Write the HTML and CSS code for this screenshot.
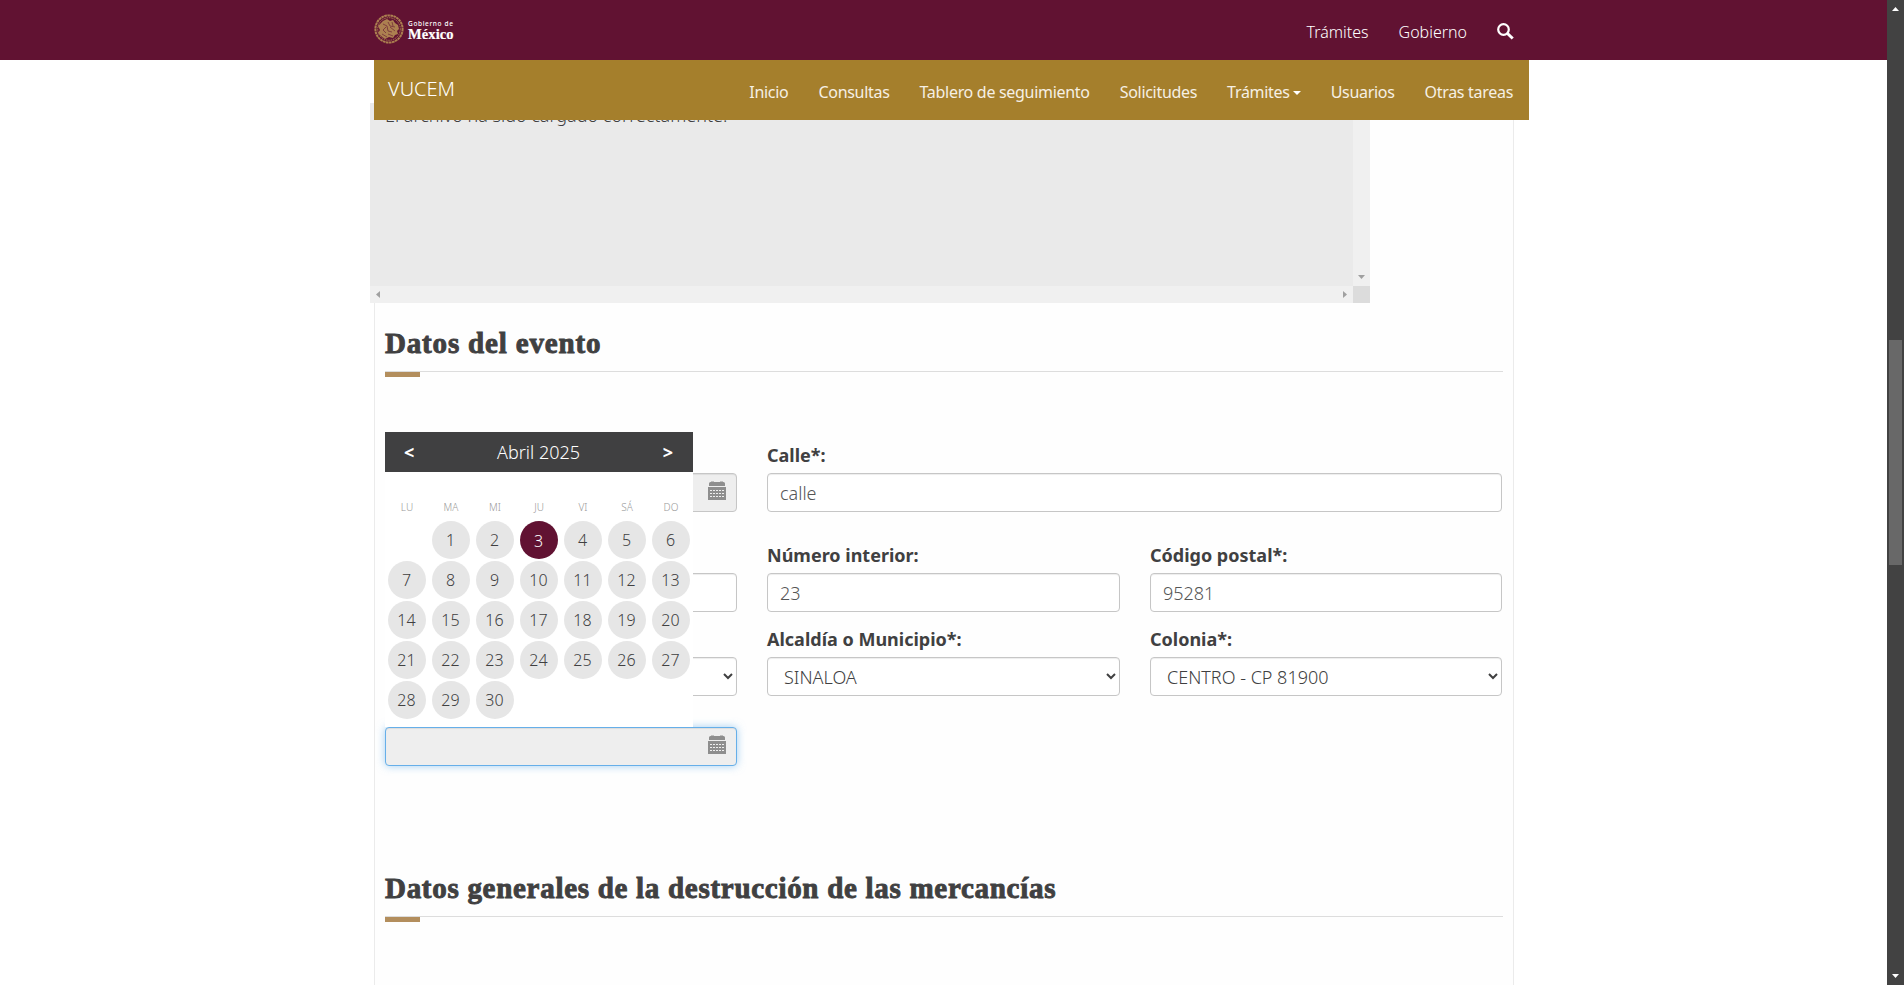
FILE: index.html
```html
<!DOCTYPE html>
<html lang="es">
<head>
<meta charset="utf-8">
<title>VUCEM</title>
<link rel="stylesheet" href="styles.css">
</head>
<body>
<svg class="defs" width="0" height="0">
  <symbol id="calendar" viewBox="0 0 18 19">
    <path fill="#8e8e8e" d="M1 2.5Q1 1 2.500 1H3V.5h3V1h6V.5h3V1h.5Q17 1 17 2.500V5H1zM0 6h18v13H0z"/>
    <path stroke="#eee" stroke-width="1" stroke-dasharray="2 1" d="M2 9.500h15M2 12.500h15M2 15.500h15"/>
  </symbol>
</svg>
<div class="window">
  <div class="viewport">
    <header class="gov-bar">
      <div class="gov-inner">
        <div class="gov-logo">
          <svg class="emblem" viewBox="0 0 30 30" fill="none" stroke="#ac8050">
            <circle cx="15" cy="15" r="13.600" stroke-width="2" stroke-dasharray="2.600 .5"/>
            <circle cx="15" cy="15" r="11.300" stroke-width=".9" stroke-dasharray="1.600 .8"/>
            <path fill="#ac8050" stroke="none" d="M9 7l4-2 3 2 3-1 2 3 3 2 1 4-2 2 1 3-3 1-2 3-4-1-4 2-4-3-3-3 2-3-2-4z"/>
            <path stroke="#611232" stroke-width=".6" d="M9 10l4 2 1 5 4 1M14 8l2 4 5 1M12 13l-3 3 3 3M16 13l5 4M14 20l5 2M18 8l1 4M8 20l5 3"/>
          </svg>
          <div class="gov-name"><span class="gov-small">Gobierno de</span><span class="gov-big">México</span></div>
        </div>
        <nav class="gov-links">
          <a>Trámites</a><a>Gobierno</a>
          <svg class="search" viewBox="0 0 17 17" fill="none" stroke="#fff"><circle cx="6.500" cy="6.500" r="5.300" stroke-width="2.200"/><path stroke-width="3" d="M10.500 10.500l5.200 5"/></svg>
        </nav>
      </div>
    </header>
    <nav class="site-bar">
      <span class="brand">VUCEM</span>
      <div class="site-links">
        <a>Inicio</a><a>Consultas</a><a>Tablero de seguimiento</a><a>Solicitudes</a><a class="drop">Trámites</a><a>Usuarios</a><a>Otras tareas</a>
      </div>
    </nav>
    <main class="content">
      <section class="log">
        <div class="log-text">El archivo ha sido cargado correctamente.</div>
        <div class="v-scroll"><svg width="7" height="4"><path fill="#a0a0a0" d="M0 0h7L3.500 4z"/></svg></div>
        <div class="h-scroll">
          <svg width="4" height="7"><path fill="#a0a0a0" d="M4 0v7L0 3.500z"/></svg>
          <svg width="4" height="7"><path fill="#a0a0a0" d="M0 0v7l4-3.500z"/></svg>
        </div>
        <div class="corner"></div>
      </section>

      <h3 class="title title-event">Datos del evento</h3>

      <form class="form">
        <div class="field row-1 date"><label></label><div class="date-box"><svg class="cal-icon"><use href="#calendar"/></svg></div></div>
        <div class="field row-1 wide"><label>Calle*:</label><input class="control" value="calle"></div>

        <div class="field row-2"><label></label><input class="control"></div>
        <div class="field row-2"><label>Número interior:</label><input class="control" value="23"></div>
        <div class="field row-2"><label>Código postal*:</label><input class="control" value="95281"></div>

        <div class="field row-3"><label></label><select class="control"><option></option></select></div>
        <div class="field row-3"><label>Alcaldía o Municipio*:</label><select class="control"><option>SINALOA</option></select></div>
        <div class="field row-3"><label>Colonia*:</label><select class="control"><option>CENTRO - CP 81900</option></select></div>

        <div class="field row-4"><div class="date-box focused"><svg class="cal-icon"><use href="#calendar"/></svg></div></div>

        <div class="calendar">
          <div class="cal-head"><b>&lt;</b><span>Abril 2025</span><b>&gt;</b></div>
          <div class="weekdays"><span>LU</span><span>MA</span><span>MI</span><span>JU</span><span>VI</span><span>SÁ</span><span>DO</span></div>
          <div class="days">
            <span class="first">1</span><span>2</span><span class="today">3</span><span>4</span><span>5</span><span>6</span>
            <span>7</span><span>8</span><span>9</span><span>10</span><span>11</span><span>12</span><span>13</span>
            <span>14</span><span>15</span><span>16</span><span>17</span><span>18</span><span>19</span><span>20</span>
            <span>21</span><span>22</span><span>23</span><span>24</span><span>25</span><span>26</span><span>27</span>
            <span>28</span><span>29</span><span>30</span>
          </div>
        </div>
      </form>

      <h3 class="title title-general">Datos generales de la destrucción de las mercancías</h3>
    </main>
  </div>
  <aside class="page-scroll">
    <svg width="7" height="4"><path fill="#fff" d="M0 4h7L3.500 0z"/></svg>
    <div class="thumb"></div>
    <svg width="7" height="4"><path fill="#fff" d="M0 0h7L3.500 4z"/></svg>
  </aside>
</div>
</body>
</html>
```

FILE: styles.css
```css
* { box-sizing: border-box; }
body {
  margin: 0;
  overflow: hidden;
  background: #fff;
  color: #404041;
  font-family: "Noto Sans", "Open Sans", sans-serif;
  font-size: 18px;
  font-weight: 300;
}
.defs { display: block; }
.window { display: flex; height: 985px; }
.viewport { flex: 1; height: 985px; overflow: hidden; display: flex; flex-direction: column; }

.gov-bar { height: 60px; flex: none; background: #611232; position: relative; z-index: 3; }
.gov-inner { margin-left: 374px; width: 1140px; height: 60px; display: flex; justify-content: space-between; align-items: flex-start; }
.gov-logo { display: flex; gap: 4px; padding-top: 14px; }
.emblem { width: 30px; height: 30px; }
.gov-name { display: flex; flex-direction: column; padding-top: 6px; color: #fff; white-space: nowrap; }
.gov-small { font: 500 6.5px/8px "Noto Sans", sans-serif; letter-spacing: .65px; }
.gov-big { font: bold 14.5px/12px "Liberation Serif", serif; letter-spacing: .1px; -webkit-text-stroke: .2px #fff; }
.gov-links { display: flex; gap: 30px; color: #fff; font-size: 16px; line-height: 24px; padding-top: 20px; letter-spacing: 0; }
.search { width: 17px; height: 17px; margin-top: 3px; }

.site-bar {
  height: 60px; flex: none; width: 1155px; margin-left: 374px;
  background: #a57f2c; color: #fff; position: relative; z-index: 3;
  display: flex; justify-content: space-between; padding: 0 16px 0 14px;
}
.brand { font-size: 20px; line-height: 28px; padding-top: 15px; letter-spacing: 0; }
.site-links { display: flex; gap: 30px; font-size: 16px; line-height: 24px; padding-top: 20px; letter-spacing: -.3px; font-weight: 400; }
.site-links a { color: #f6f0e4; }
.drop::after {
  content: ""; display: inline-block; margin-left: 3px; vertical-align: 3px;
  border: 4px solid transparent; border-top-color: #fff; border-bottom: 0;
}

.content {
  flex: 1; width: 1140px; margin-left: 374px; padding: 0 10px;
  border: solid #ebebeb; border-width: 0 1px; background: #fefefe;
}
.log {
  width: 1000px; height: 200px; margin: -17px 0 0 -15px;
  display: grid; grid-template: 183px 17px / 983px 17px; background: #eaeaea; position: relative;
}
.log-text { padding-left: 15px; line-height: 24px; }
.v-scroll { background: #f0f0f0; display: flex; align-items: flex-end; justify-content: center; padding-bottom: 7px; }
.h-scroll { background: #f0f0f0; display: flex; align-items: center; justify-content: space-between; padding: 0 6px; }
.corner { background: #dcdcdc; }

.title {
  position: relative; margin: 0; width: 1118px; border-bottom: 1px solid #ddd;
  font: bold 29px/40px "Liberation Serif", serif; white-space: nowrap;
  -webkit-text-stroke: .9px #404041;
}
.title::after { content: ""; position: absolute; left: 0; top: 100%; margin-top: 1px; width: 35px; height: 5px; background: #b38e5d; }
.title-event { margin-top: 20px; height: 49px; letter-spacing: .83px; }
.title-general { margin-top: 102px; height: 49px; letter-spacing: .71px; }

.form {
  position: relative; margin-top: 60px; width: 1117px;
  display: grid; grid-template-columns: 352px 353px 352px; column-gap: 30px;
  grid-template-rows: 80px 100px 84px 70px;
}
.field { display: flex; flex-direction: column; justify-content: flex-end; min-width: 0; }
.wide { grid-column: span 2; }
label { font-weight: 700; font-size: 18px; line-height: 24px; height: 24px; margin-bottom: 6px; }
.control {
  width: 100%; height: 39px; margin: 0; padding: 6px 12px;
  border: 1px solid #c6c6c6; border-radius: 4px; background-color: #fff;
  box-shadow: inset 0 1px 1px rgba(0, 0, 0, .075);
  color: #404041; font: 300 18px/25px "Noto Sans", sans-serif;
}
input.control { color: #555; }
.date-box {
  height: 39px; border: 1px solid #c6c6c6; border-radius: 4px; background: #eee;
  box-shadow: inset 0 1px 1px rgba(0, 0, 0, .075);
  display: flex; justify-content: flex-end; padding: 7px 10px 0 0;
}
.focused { border-color: #66afe9; box-shadow: inset 0 1px 1px rgba(0, 0, 0, .075), 0 0 8px rgba(102, 175, 233, .6); }
.cal-icon { width: 18px; height: 19px; }

.calendar { position: absolute; left: 0; top: 0; width: 308px; height: 295px; background: #fff; }
.cal-head { height: 40px; background: #404041; color: #fff; display: flex; align-items: center; justify-content: space-between; padding: 0 20px 0 19px; }
.cal-head b { font-weight: 700; }
.weekdays { display: grid; grid-template-columns: repeat(7, 44px); margin-top: 26px; height: 20px; font-size: 10px; line-height: 18px; color: #999; text-align: center; }
.days { display: grid; grid-template-columns: repeat(7, 44px); grid-auto-rows: 40px; justify-items: center; margin-top: 3px; }
.days span { width: 38px; height: 38px; border-radius: 50%; background: #e6e6e6; text-align: center; font-size: 16px; line-height: 38px; padding-right: 1px; }
.days .first { grid-column: 2; }
.days .today { background: #611232; color: #fff; line-height: 40px; }

.page-scroll { width: 17px; background: #424242; display: flex; flex-direction: column; align-items: center; justify-content: space-between; padding: 7px 0; }
.thumb { width: 13px; height: 225px; background: #686868; margin-top: -81px; }
```
